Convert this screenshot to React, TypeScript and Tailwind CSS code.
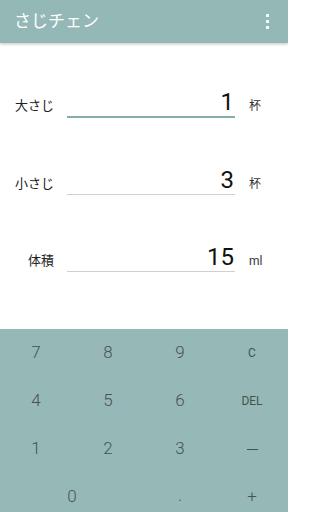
const jp = "font-['Roboto','Noto_Sans_CJK_JP',sans-serif]"

type Row = { label: string; value: string; unit: string; active?: boolean }

const rows: Row[] = [
  { label: "大さじ", value: "1", unit: "杯", active: true },
  { label: "小さじ", value: "3", unit: "杯" },
  { label: "体積", value: "15", unit: "ml" },
]

function Key({ label, small, wide }: { label: React.ReactNode; small?: boolean; wide?: boolean }) {
  return (
    <div
      className={`flex h-[48px] items-center justify-center text-[#46544f] ${wide ? "col-span-2" : ""} ${
        small ? "text-[12px]" : "text-[17px] font-light"
      }`}
    >
      {label}
    </div>
  )
}

export default function App() {
  return (
    <div className={`flex h-[512px] w-[288px] flex-col overflow-hidden bg-white ${jp}`}>
      <header className="relative z-10 flex h-[43px] shrink-0 items-center justify-between bg-[#94b8b6] pl-[14px] pr-[19px] shadow-[0_1px_3px_rgba(0,0,0,0.25)]">
        <h1 className="text-[17px] leading-none text-white">さじチェン</h1>
        <div className="flex flex-col gap-[3px]">
          <span className="h-[3px] w-[3px] bg-white/90"></span>
          <span className="h-[3px] w-[3px] bg-white/90"></span>
          <span className="h-[3px] w-[3px] bg-white/90"></span>
        </div>
      </header>

      <main className="flex-1 pt-[28px]">
        {rows.map((r) => (
          <div key={r.label} className="flex h-[77px] items-end pb-[30px]">
            <div className="flex items-baseline">
              <span className="w-[54px] text-right text-[13px] text-[#222]">{r.label}</span>
              <div
                className={`ml-[13px] w-[168px] text-right text-[24px] leading-[27px] text-[#111] ${
                  r.active ? "border-b-2 border-[#84adab]" : "border-b border-[#d0d0d0]"
                }`}
              >
                <span className="pr-[1px]">{r.value}</span>
              </div>
              <span className="ml-[14px] text-[12px] text-[#333]">{r.unit}</span>
            </div>
          </div>
        ))}
      </main>

      <section className="grid h-[183px] shrink-0 grid-cols-4 content-start bg-[#96b8b6]">
        <Key label="7" />
        <Key label="8" />
        <Key label="9" />
        <Key label="C" small />
        <Key label="4" />
        <Key label="5" />
        <Key label="6" />
        <Key label="DEL" small />
        <Key label="1" />
        <Key label="2" />
        <Key label="3" />
        <Key label={<span className="block h-px w-[11px] bg-[#46544f]"></span>} />
        <Key label="0" wide />
        <Key label="." small />
        <Key label="+" />
      </section>
    </div>
  )
}
